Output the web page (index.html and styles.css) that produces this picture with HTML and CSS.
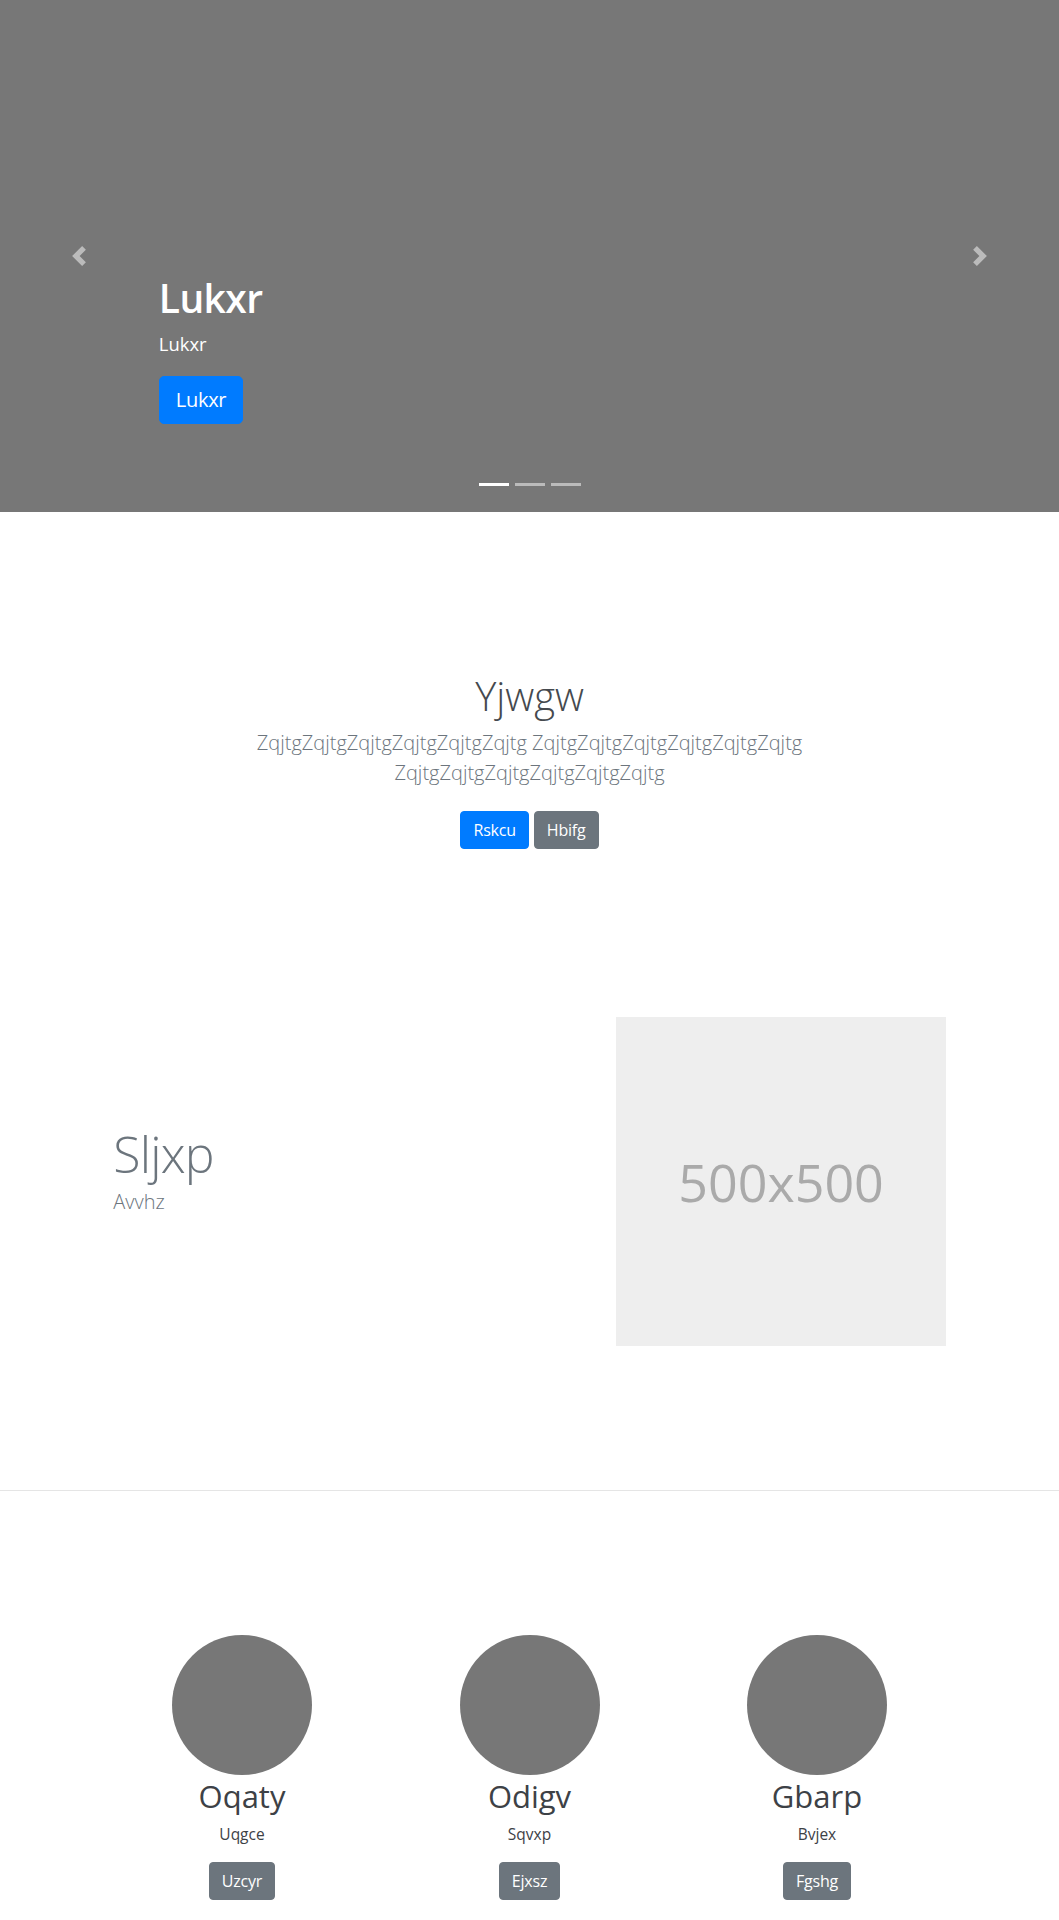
FILE: index.html
```html
<!DOCTYPE html>
<html lang="en">
<head>
<meta charset="utf-8">
<title>Carousel</title>
<link rel="stylesheet" href="styles.css">
</head>
<body>
<div class="carousel">
  <ol class="indicators">
    <li class="active"></li>
    <li></li>
    <li></li>
  </ol>
  <div class="caption">
    <h1 class="caption-title">Lukxr</h1>
    <p class="caption-sub">Lukxr</p>
    <div class="caption-actions"><a class="btn btn-lg btn-primary" href="#">Lukxr</a></div>
  </div>
  <a class="control control-prev" href="#"><svg class="control-icon" viewBox="0 0 8 8" width="20" height="20"><path fill="#fff" d="M5.25 0l-4 4 4 4 1.5-1.5-2.5-2.5 2.5-2.5-1.5-1.5z"/></svg></a>
  <a class="control control-next" href="#"><svg class="control-icon" viewBox="0 0 8 8" width="20" height="20"><path fill="#fff" d="M2.75 0l-1.5 1.5 2.5 2.5-2.5 2.5 1.5 1.5 4-4-4-4z"/></svg></a>
</div>

<section class="jumbo">
  <div class="jumbo-inner">
    <h1 class="jumbo-title">Yjwgw</h1>
    <p class="lead muted">ZqjtgZqjtgZqjtgZqjtgZqjtgZqjtg ZqjtgZqjtgZqjtgZqjtgZqjtgZqjtg ZqjtgZqjtgZqjtgZqjtgZqjtgZqjtg</p>
    <div class="jumbo-actions">
      <a class="btn btn-primary" href="#">Rskcu</a>
      <a class="btn btn-secondary" href="#">Hbifg</a>
    </div>
  </div>
</section>

<div class="container featurette-wrap">
  <div class="featurette">
    <div class="feat-text">
      <h2 class="feat-heading">Sljxp</h2>
      <p class="lead muted">Avvhz</p>
    </div>
    <div class="feat-media">
      <div class="placeholder">500x500</div>
    </div>
  </div>
</div>

<hr class="divider">

<div class="container">
  <div class="team">
    <div class="member">
      <div class="avatar"></div>
      <h2 class="member-name">Oqaty</h2>
      <p class="member-text">Uqgce</p>
      <a class="btn btn-secondary" href="#">Uzcyr</a>
    </div>
    <div class="member">
      <div class="avatar"></div>
      <h2 class="member-name">Odigv</h2>
      <p class="member-text">Sqvxp</p>
      <a class="btn btn-secondary" href="#">Ejxsz</a>
    </div>
    <div class="member">
      <div class="avatar"></div>
      <h2 class="member-name">Gbarp</h2>
      <p class="member-text">Bvjex</p>
      <a class="btn btn-secondary" href="#">Fgshg</a>
    </div>
  </div>
</div>
</body>
</html>
```

FILE: styles.css
```css
* { box-sizing: border-box; }

body {
  margin: 0;
  font-family: "Open Sans", "Noto Sans", "Liberation Sans", sans-serif;
  font-size: 16px;
  line-height: 1.5;
  color: #212529;
  background: #fff;
}

/* Buttons */
.btn {
  display: inline-block;
  font-size: 16px;
  line-height: 24px;
  padding: 6px 12px;
  border: 1px solid transparent;
  border-radius: 4px;
  color: #fff;
  text-decoration: none;
  font-weight: 400;
  letter-spacing: -0.2px;
}
.btn-lg {
  font-size: 20px;
  line-height: 30px;
  padding: 8px 16px;
  border-radius: 5px;
  letter-spacing: -0.3px;
}
.btn-primary { background: #007bff; border-color: #007bff; }
.btn-secondary { background: #6c757d; border-color: #6c757d; }

/* Carousel */
.carousel {
  position: relative;
  height: 512px;
  background: #777;
  margin-bottom: 64px;
}
.indicators {
  position: absolute;
  left: 0;
  right: 0;
  top: 483px;
  margin: 0;
  padding: 0;
  list-style: none;
  display: flex;
  justify-content: center;
  gap: 6px;
}
.indicators li {
  width: 30px;
  height: 3px;
  background: #fff;
  opacity: .5;
}
.indicators li.active { opacity: 1; }

.caption {
  position: absolute;
  left: 15%;
  right: 15%;
  bottom: 48px;
  padding: 20px 0;
  color: #fff;
  text-align: left;
}
.caption-title {
  margin: 0 0 8px;
  font-size: 39px;
  line-height: 48px;
  font-weight: 600;
  letter-spacing: -0.6px;
}
.caption-sub {
  margin: 0 0 18px;
  font-size: 18.4px;
  line-height: 27.6px;
}
.caption-actions {
  margin-bottom: 20px;
  display: flex;
}

.control {
  position: absolute;
  top: 0;
  bottom: 0;
  width: 15%;
  display: flex;
  align-items: center;
  justify-content: center;
  opacity: .5;
}
.control-prev { left: 0; }
.control-next { right: 0; }
.control-icon { display: block; width: 20px; height: 20px; }

/* Jumbotron */
.jumbo {
  padding: 96px 0;
  text-align: center;
}
.jumbo-inner {
  max-width: 640px;
  margin: 0 auto;
  padding: 0 15px;
}
.jumbo-title {
  margin: 0 0 8px;
  font-size: 40px;
  line-height: 48px;
  font-weight: 300;
  color: #45494e;
}
.lead {
  font-size: 20px;
  line-height: 30px;
  font-weight: 300;
  margin: 0 0 16px;
}
.muted { color: #6c757d; }
.jumbo-actions {
  display: flex;
  justify-content: center;
  gap: 5px;
  margin: 23px 0 8px;
}

/* Featurette */
.container {
  width: 862.5px;
  margin: 0 auto;
}
.featurette-wrap { margin-top: 64px; }
.featurette {
  display: flex;
  align-items: flex-start;
}
.feat-text {
  flex: 0 0 58.3333%;
  padding: 0 15px;
}
.feat-media {
  flex: 0 0 41.6667%;
  padding: 0 15px;
}
.feat-heading {
  margin: 112px 0 8px;
  font-size: 50px;
  line-height: 1;
  font-weight: 300;
  letter-spacing: -0.8px;
  color: #6c757d;
}
.placeholder {
  width: 100%;
  aspect-ratio: 1 / 1;
  background: #eee;
  color: #aaa;
  font-size: 52px;
  display: flex;
  align-items: center;
  justify-content: center;
}

.divider {
  margin: 144px 0;
  border: 0;
  border-top: 1px solid rgba(0, 0, 0, .1);
  height: 0;
}

/* Team */
.team {
  display: grid;
  grid-template-columns: repeat(3, 1fr);
}
.member {
  padding: 0 15px;
  text-align: center;
}
.avatar {
  width: 140px;
  height: 140px;
  border-radius: 50%;
  background: #777;
  margin: 0 auto;
}
.member-name {
  margin: 2px 0 6px;
  font-size: 31px;
  line-height: 38.4px;
  font-weight: 400;
  color: #3d4146;
}
.member-text {
  margin: 0 0 16px;
  font-size: 15.5px;
  line-height: 24px;
  color: #3d4146;
}
```
